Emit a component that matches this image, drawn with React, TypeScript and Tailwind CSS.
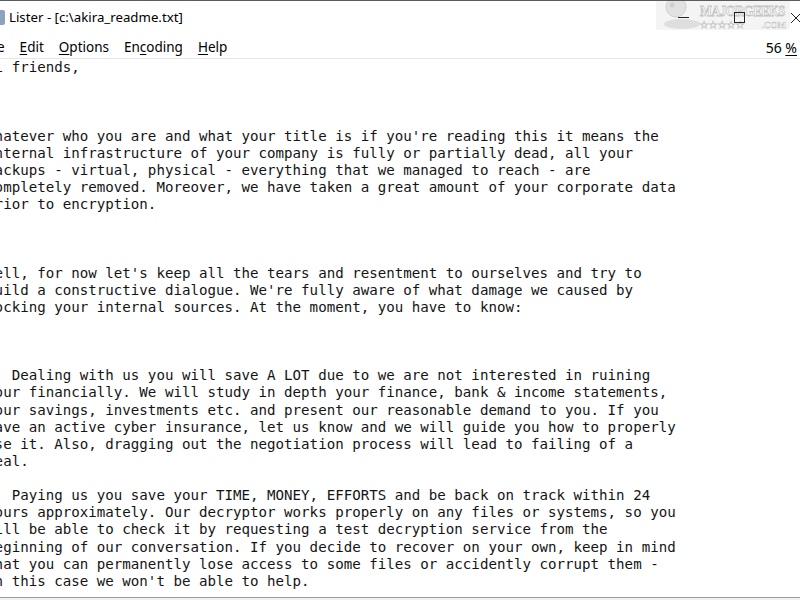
const UI_FONT = "font-['Noto_Sans','Liberation_Sans',sans-serif]"

const LINES = [
  'Hi friends,',
  '',
  '',
  '',
  "Whatever who you are and what your title is if you're reading this it means the",
  'internal infrastructure of your company is fully or partially dead, all your',
  'backups - virtual, physical - everything that we managed to reach - are',
  'completely removed. Moreover, we have taken a great amount of your corporate data',
  'prior to encryption.',
  '',
  '',
  '',
  "Well, for now let's keep all the tears and resentment to ourselves and try to",
  "build a constructive dialogue. We're fully aware of what damage we caused by",
  'locking your internal sources. At the moment, you have to know:',
  '',
  '',
  '',
  '1. Dealing with us you will save A LOT due to we are not interested in ruining',
  'your financially. We will study in depth your finance, bank & income statements,',
  'your savings, investments etc. and present our reasonable demand to you. If you',
  'have an active cyber insurance, let us know and we will guide you how to properly',
  'use it. Also, dragging out the negotiation process will lead to failing of a',
  'deal.',
  '',
  '2. Paying us you save your TIME, MONEY, EFFORTS and be back on track within 24',
  'hours approximately. Our decryptor works properly on any files or systems, so you',
  'will be able to check it by requesting a test decryption service from the',
  'beginning of our conversation. If you decide to recover on your own, keep in mind',
  "that you can permanently lose access to some files or accidently corrupt them -",
  "in this case we won't be able to help.",
]

// menu entry with one underlined access key
const MenuItem = ({ before = '', hot, after = '' }: { before?: string; hot: string; after?: string }) => (
  <span className="whitespace-pre">
    {before}
    <span className="underline underline-offset-2">{hot}</span>
    {after}
  </span>
)

const Watermark = () => (
  <div className="absolute left-[656px] top-0 flex h-[29px] w-[134px] items-start rounded-br-sm bg-[#ececec]/60">
    <svg width="44" height="29" viewBox="0 0 44 29" className="shrink-0">
      <circle cx="20" cy="6" r="10" fill="#e2e2e2" stroke="#d0d0d0" />
      <ellipse cx="26" cy="23" rx="18" ry="5" fill="#dedede" />
      <circle cx="16" cy="4" r="2.5" fill="#cfcfcf" />
    </svg>
    <div className="flex w-[86px] flex-col leading-none">
      <span className="mt-[2px] origin-top-left scale-y-[1.25] whitespace-nowrap font-['Liberation_Serif',serif] text-[12.5px] font-bold tracking-[-0.4px] text-white [-webkit-text-stroke:0.7px_#c4c4c4]">
        MAJORGEEKS
      </span>
      <span className="mt-[5px] flex justify-between font-['Liberation_Serif',serif] text-[9px] font-bold text-white [-webkit-text-stroke:0.5px_#c4c4c4]">
        <span className="tracking-[1px]">★★★★★</span>
        <span>.COM</span>
      </span>
    </div>
  </div>
)

export default function App() {
  return (
    <div className="relative flex h-[600px] w-[800px] flex-col overflow-hidden bg-white text-black">
      <div className="h-px bg-[#5c5c5c]" />

      {/* title bar */}
      <div className={`relative flex h-[33px] items-center ${UI_FONT} text-[13.25px]`}>
        <div className="h-[15px] w-[5px] rounded-r-[2px] bg-[#8da3bd]" />
        <span className="ml-[4px] whitespace-pre">Lister - [c:\akira_readme.txt]</span>
        <Watermark />
        <div className="absolute right-0 top-0 z-10 flex h-full items-center">
          <div className="flex w-[56px] justify-center">
            <div className="h-px w-[11px] bg-[#222]" />
          </div>
          <div className="flex w-[56px] justify-center">
            <div className="h-[11px] w-[11px] border border-[#222]" />
          </div>
          <div className="flex w-[33px] justify-end">
            <svg width="12" height="12" viewBox="0 0 12 12" className="-mr-[2px]">
              <path d="M1 1 L11 11 M11 1 L1 11" stroke="#222" strokeWidth="1" />
            </svg>
          </div>
        </div>
      </div>

      {/* menu bar */}
      <div className={`flex h-[24px] items-center gap-[15px] pt-[3px] ${UI_FONT} text-[13.5px]`}>
        <span className="-ml-[17px]">
          <MenuItem hot="F" after="ile" />
        </span>
        <MenuItem hot="E" after="dit" />
        <MenuItem hot="O" after="ptions" />
        <MenuItem before="En" hot="c" after="oding" />
        <MenuItem hot="H" after="elp" />
        <span className="ml-auto mr-[3px] whitespace-pre text-[14px]">
          56 <span className="underline underline-offset-2">%</span>
        </span>
      </div>
      <div className="h-px bg-[#e6e6e6]" />

      {/* text view */}
      <div className="flex-1 overflow-hidden">
        <div className="-ml-[13.9px] font-['DejaVu_Sans_Mono',monospace] text-[14.15px] leading-[17.13px] text-[#141414]">
          {LINES.map((l, i) => (
            <div key={i} className="h-[17.13px] whitespace-pre">
              {l}
            </div>
          ))}
        </div>
      </div>
      <div className="h-[3px] border-t border-[#9c9c9c] bg-[#f0f0f0]" />
    </div>
  )
}
